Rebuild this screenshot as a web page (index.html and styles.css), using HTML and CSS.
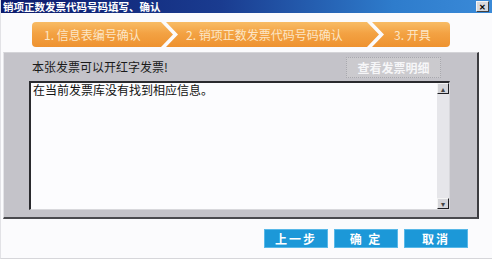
FILE: index.html
```html
<!DOCTYPE html>
<html>

<head>
    <title>销项正数发票代码号码填写、确认</title>
    <link rel="stylesheet" href="styles.css">
</head>

<body>
    <div class="window">
        <div class="titlebar">
            <span class="title">销项正数发票代码号码填写、确认</span>
            <span class="close">✕</span>
        </div>

        <div class="steps">
            <div class="step first">1. 信息表编号确认</div>
            <div class="step middle">2. 销项正数发票代码号码确认</div>
            <div class="step last">3. 开具</div>
        </div>

        <div class="panel">
            <div class="panel-head">
                <span class="notice">本张发票可以开红字发票!</span>
                <button class="detail-btn">查看发票明细</button>
            </div>
            <div class="textbox">
                <div class="textbox-text">在当前发票库没有找到相应信息。</div>
                <div class="scrollbar">
                    <div class="scroll-btn">▴</div>
                    <div class="scroll-track"></div>
                    <div class="scroll-btn">▾</div>
                </div>
            </div>
        </div>

        <div class="footer">
            <button class="blue-btn">上一步</button>
            <button class="blue-btn">确 定</button>
            <button class="blue-btn">取消</button>
        </div>
    </div>
</body>

</html>
```

FILE: styles.css
```css
body {
    margin: 0;
    background: #fbfbfd;
    font-family: "Noto Sans CJK SC", "Noto Sans", sans-serif;
}

.window {
    width: 492px;
    height: 259px;
    box-sizing: border-box;
    border-left: 1px solid #e2e2e6;
    border-bottom: 1px solid #d6d6da;
    background: #fbfbfd;
}

.titlebar {
    height: 13px;
    display: flex;
    align-items: center;
    justify-content: space-between;
    padding: 0 3px 0 2px;
    background: linear-gradient(to right, #0c1a6c 0%, #1a3c90 45%, #2e7ccc 80%, #3a8ad8 100%);
}

.title {
    color: #fff;
    font-size: 10.5px;
    line-height: 13px;
    font-weight: bold;
}

.close {
    width: 11px;
    height: 9px;
    background: #d8d8dc;
    border: 1px solid #f4f4f4;
    border-right-color: #404040;
    border-bottom-color: #404040;
    font-size: 8px;
    line-height: 9px;
    text-align: center;
    font-weight: bold;
    color: #000;
}

.steps {
    display: flex;
    height: 25px;
    margin: 9px 0 5px 31px;
}

.step {
    height: 25px;
    line-height: 25px;
    font-size: 12px;
    color: #fce6c6;
    background: linear-gradient(to bottom, #f8bc66 0%, #f3a243 45%, #ee9230 100%);
    box-sizing: border-box;
}

.step.first {
    width: 141px;
    padding-left: 12px;
    border-radius: 4px 0 0 4px;
    clip-path: polygon(0 0, calc(100% - 12px) 0, 100% 50%, calc(100% - 12px) 100%, 0 100%);
}

.step.middle {
    width: 213px;
    margin-left: -7px;
    padding-left: 20px;
    clip-path: polygon(0 0, calc(100% - 12px) 0, 100% 50%, calc(100% - 12px) 100%, 0 100%, 12px 50%);
}

.step.last {
    width: 78px;
    margin-left: -7px;
    padding-left: 22px;
    border-radius: 0 4px 4px 0;
    clip-path: polygon(0 0, 100% 0, 100% 100%, 0 100%, 12px 50%);
}

.panel {
    margin-left: 2px;
    width: 476px;
    height: 167px;
    box-sizing: border-box;
    background: #c4c3c9;
    border-top: 1px solid #d4d4d8;
    border-left: 1px solid #e4e4e8;
    border-right: 2px solid #3c3c40;
    border-bottom: 2px solid #4a4a4e;
    padding: 4px 0 0 25px;
}

.panel-head {
    width: 421px;
    height: 21px;
    display: flex;
    justify-content: space-between;
    align-items: center;
    margin-bottom: 3px;
}

.notice {
    font-size: 12px;
    color: #1a1a1a;
    padding-left: 3px;
    margin-top: -2px;
}

.detail-btn {
    width: 95px;
    height: 21px;
    margin-right: 9px;
    padding: 0;
    background: #cbcace;
    border: 1px dotted #a8a8ae;
    color: #f6f6f8;
    font-family: "Noto Sans CJK SC", sans-serif;
    font-size: 12px;
    font-weight: bold;
}

.textbox {
    width: 421px;
    height: 129px;
    box-sizing: border-box;
    display: flex;
    background: #fcfcfe;
    border-top: 2px solid #2a2a2e;
    border-left: 2px solid #2a2a2e;
    border-right: 1px solid #d8d8dc;
    border-bottom: 1px solid #d8d8dc;
}

.textbox-text {
    flex: 1;
    font-size: 12px;
    line-height: 12px;
    color: #111;
    padding: 1px 0 0 2px;
}

.scrollbar {
    width: 12px;
    display: flex;
    flex-direction: column;
    background: #e6e6ea;
}

.scroll-btn {
    height: 11px;
    box-sizing: border-box;
    background: #d6d6da;
    border: 1px solid #f4f4f4;
    border-right-color: #202024;
    border-bottom-color: #202024;
    font-size: 8px;
    line-height: 9px;
    text-align: center;
    color: #444;
}

.scroll-track {
    flex: 1;
}

.footer {
    display: flex;
    justify-content: flex-end;
    gap: 6px;
    padding: 10px 24px 0 0;
}

.blue-btn {
    width: 64px;
    height: 19px;
    padding: 0;
    background: #1c98d8;
    border: 1px solid #58b8e8;
    color: #fff;
    font-family: "Noto Sans CJK SC", sans-serif;
    font-size: 12px;
    font-weight: bold;
    letter-spacing: 2px;
}
```
